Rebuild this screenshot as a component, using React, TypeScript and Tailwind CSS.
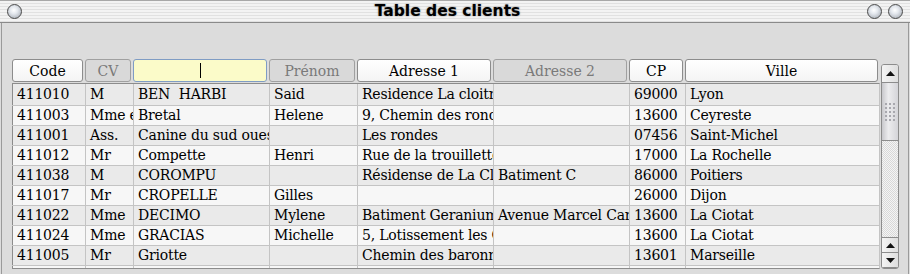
import React from 'react';

const serif = "font-['DejaVu_Serif','Liberation_Serif',serif]";

const columns = [
    { title: 'Code', width: 'w-[73px]', kind: 'on' },
    { title: 'CV', width: 'w-[48px]', kind: 'off' },
    { title: '', width: 'w-[136px]', kind: 'input' },
    { title: 'Prénom', width: 'w-[88px]', kind: 'off' },
    { title: 'Adresse 1', width: 'w-[136px]', kind: 'on' },
    { title: 'Adresse 2', width: 'w-[136px]', kind: 'off' },
    { title: 'CP', width: 'w-[56px]', kind: 'on' },
    { title: 'Ville', width: 'w-[195px]', kind: 'on' },
];

const rows = [
    ['411010', 'M', 'BEN\u00a0 HARBI', 'Said', 'Residence La cloitre', '', '69000', 'Lyon'],
    ['411003', 'Mme et Mr', 'Bretal', 'Helene', '9, Chemin des ronces', '', '13600', 'Ceyreste'],
    ['411001', 'Ass.', 'Canine du sud ouest', '', 'Les rondes', '', '07456', 'Saint-Michel'],
    ['411012', 'Mr', 'Compette', 'Henri', 'Rue de la trouillette', '', '17000', 'La Rochelle'],
    ['411038', 'M', 'COROMPU', '', 'Résidense de La Clairière', 'Batiment C', '86000', 'Poitiers'],
    ['411017', 'Mr', 'CROPELLE', 'Gilles', '', '', '26000', 'Dijon'],
    ['411022', 'Mme', 'DECIMO', 'Mylene', 'Batiment Geranium', 'Avenue Marcel Carnot', '13600', 'La Ciotat'],
    ['411024', 'Mme', 'GRACIAS', 'Michelle', '5, Lotissement les Cigales', '', '13600', 'La Ciotat'],
    ['411005', 'Mr', 'Griotte', '', 'Chemin des baronnes', '', '13601', 'Marseille'],
    ['411030', 'Mr', 'Hubert', 'Paul', 'Les oliviers', '', '13400', 'Aubagne'],
];

function Bubble()
{
    return (
        <div className="w-[15px] h-[15px] rounded-full border border-[#4a4a4a] bg-[radial-gradient(circle_at_45%_40%,#ffffff_0%,#e4e8ee_35%,#9aa0a8_100%)]" />
    );
}

function HeaderCell({ title, width, kind }: { title: string; width: string; kind: string })
{
    let look = 'bg-[linear-gradient(#ffffff,#f4f4f4)] border-[#8c8c8c] text-black';
    if (kind === 'off') look = 'bg-[#d9d9d9] border-[#a0a0a0] text-[#7a7a7a]';
    if (kind === 'input') look = 'bg-[#fbfbc9] border-[#7f9cc4] text-black';

    return (
        <div className={`${width} shrink-0 pr-[2px]`}>
            <div className={`h-[23px] w-full rounded-[3px] border flex items-center justify-center text-[14px] leading-none ${look}`}>
                {kind === 'input' ? <span className="block w-px h-[15px] bg-black" /> : title}
            </div>
        </div>
    );
}

function ScrollButton({ up, height }: { up: boolean; height: string })
{
    return (
        <div className={`${height} shrink-0 border-b border-[#8c8c8c] bg-[linear-gradient(90deg,#f4f4f4,#dedede)] flex items-center justify-center`}>
            <svg width="9" height="5" viewBox="0 0 9 5">
                <path d={up ? 'M0 5 L4.5 0 L9 5 Z' : 'M0 0 L4.5 5 L9 0 Z'} fill="#111" />
            </svg>
        </div>
    );
}

function Scrollbar()
{
    return (
        <div className="ml-[1px] mt-[5px] w-[18px] h-[205px] shrink-0 rounded-[3px] border border-[#8c8c8c] overflow-hidden flex flex-col bg-[repeating-conic-gradient(#d8d8d8_0_25%,#f4f4f4_0_50%)] bg-[length:2px_2px]">
            <ScrollButton up height="h-[18px]" />
            <div className="h-[58px] shrink-0 border-b border-[#8c8c8c] bg-[linear-gradient(90deg,#c8c8cc,#ececee_40%,#d4d4d8)] flex items-center justify-center">
                <div className="grid grid-cols-3 gap-[2px]">
                    {Array.from({ length: 15 }).map((_, i) => (
                        <span key={i} className="block w-[2px] h-[2px] bg-[#a8a8ae]" />
                    ))}
                </div>
            </div>
            <div className="flex-1" />
            <div className="border-t border-[#8c8c8c]">
                <ScrollButton up height="h-[15px]" />
                <ScrollButton up={false} height="h-[15px]" />
            </div>
        </div>
    );
}

export default function App()
{
    return (
        <div className={`w-[910px] h-[274px] overflow-hidden bg-[#dcdcdc] ${serif}`}>
            {/* title bar */}
            <div className="h-[23px] border-t border-[#a8a8a8] border-b border-b-[#8a8a8a] bg-[repeating-linear-gradient(to_bottom,#f3f3f3_0px,#f3f3f3_2px,#e1e1e1_2px,#e1e1e1_3px)] flex items-center px-[7px]">
                <Bubble />
                <div className="flex-1 text-center text-[15.5px] font-bold text-black font-['DejaVu_Sans','Liberation_Sans',sans-serif] [text-shadow:0_0_2px_rgba(0,0,0,0.45)] pl-[6px]">
                    Table des clients
                </div>
                <div className="flex gap-[6px]">
                    <Bubble />
                    <Bubble />
                </div>
            </div>

            <div className="h-[251px] mx-[1px] border-l border-r border-[#9a9a9a] pl-[10px] pt-[36px] flex">
                <div className="w-[868px] shrink-0">
                    <div className="flex h-[24px]">
                        {columns.map((c, i) => (
                            <HeaderCell key={i} title={c.title} width={c.width} kind={c.kind} />
                        ))}
                    </div>
                    <div className="h-[186px] overflow-hidden border-t border-b border-[#8c8c8c] border-r border-r-[#c4c4c4]">
                        {rows.map((r, ri) => (
                            <div key={ri} className={`flex ${ri === 0 ? 'h-[22px]' : 'h-[20px]'} border-b border-[#c4c4c4] ${ri % 2 === 0 ? 'bg-[#eaeaea]' : 'bg-[#f7f7f7]'}`}>
                                {r.map((v, ci) => (
                                    <div key={ci} className={`${columns[ci].width} shrink-0 border-l ${ci === 0 ? 'border-[#8c8c8c]' : 'border-[#c4c4c4]'} pl-[4px] overflow-hidden whitespace-nowrap text-[14px] tracking-[-0.2px] ${ri === 0 ? 'leading-[21px]' : 'leading-[19px]'} text-black`}>
                                        {v}
                                    </div>
                                ))}
                            </div>
                        ))}
                    </div>
                </div>
                <Scrollbar />
            </div>
        </div>
    );
}
